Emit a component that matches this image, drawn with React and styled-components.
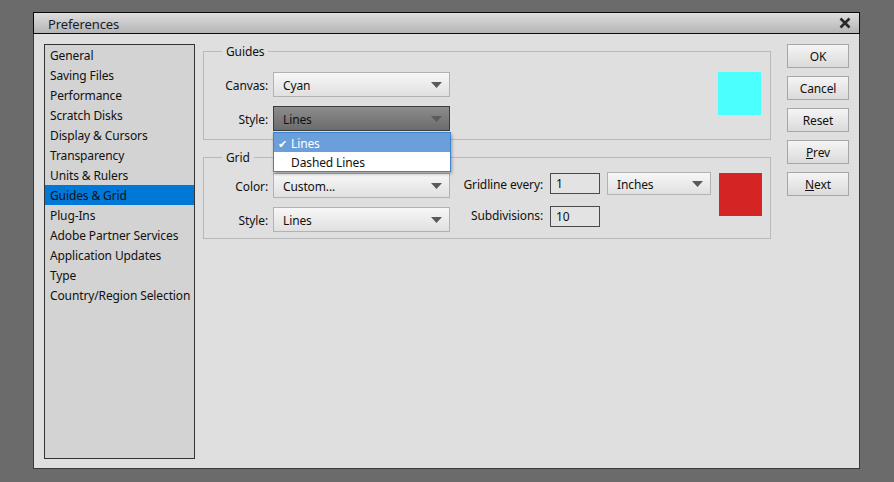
import React from "react";
import styled, { createGlobalStyle } from "styled-components";

const Global = createGlobalStyle`
  html, body { margin: 0; padding: 0; background: #6b6b6b; }
  body { font-family: "Noto Sans", "Segoe UI", sans-serif; font-size: 12px; letter-spacing: -0.12px; color: #111; }
  * { box-sizing: border-box; }
`;

const Page = styled.div`
  width: 894px;
  height: 482px;
  padding: 12px 0 0 33px;
`;

const Dialog = styled.div`
  width: 827px;
  height: 457px;
  background: #dfdfdf;
  border: 1px solid #3a3a3a;
  border-top: none;
  display: flex;
  flex-direction: column;
`;

const TitleBar = styled.div`
  height: 22px;
  margin: 0 -1px;
  border: 1px solid #0a0a0a;
  background: linear-gradient(#dedede, #b4b4b4);
  display: flex;
  align-items: center;
  justify-content: space-between;
  padding: 1px 8px 0 14px;
  font-size: 13px;
  color: #1a1a2a;
`;

const Close = styled.svg`
  width: 12px;
  height: 12px;
  margin-top: -1px;
`;

const Body = styled.div`
  flex: 1;
  display: flex;
  padding: 10px 9px 9px 10px;
`;

const List = styled.ul`
  list-style: none;
  margin: 0;
  padding: 0;
  width: 151px;
  height: 415px;
  background: #d3d3d3;
  border: 1px solid #333;
`;

const Item = styled.li`
  height: 20px;
  line-height: 20px;
  padding: 1px 0 0 5px;
  white-space: nowrap;
  background: ${(p) => (p.$active ? "#0078d7" : "transparent")};
`;

const Content = styled.div`
  width: 568px;
  margin-left: 8px;
  padding-top: 7px;
  display: flex;
  flex-direction: column;
  gap: 17px;
`;

const Group = styled.div`
  position: relative;
  border: 1px solid #b9b9b9;
  padding: ${(p) => p.$pad};
  display: flex;
`;

const GroupTitle = styled.span`
  position: absolute;
  top: -9px;
  left: 18px;
  padding: 0 4px;
  background: #dfdfdf;
  line-height: 18px;
`;

const Fields = styled.div`
  display: grid;
  grid-template-columns: 64px 177px;
  column-gap: 5px;
  row-gap: 9px;
  align-items: center;
`;

const Label = styled.span`
  text-align: right;
  white-space: nowrap;
  padding-top: 1px;
`;

const SelectBox = styled.div`
  position: relative;
  width: ${(p) => p.$w || 177}px;
  height: ${(p) => p.$h || 25}px;
  border: 1px solid ${(p) => (p.$open ? "#3c3c3c" : "#b2b2b2")};
  background: ${(p) =>
    p.$open ? "linear-gradient(#8c8c8c, #6c6c6c)" : "linear-gradient(#f7f7f7, #e0e0e0)"};
  display: flex;
  align-items: center;
  justify-content: space-between;
  padding: 1px 7px 0 9px;
  color: #111;
`;

const Arrow = styled.svg`
  width: 11px;
  height: 6px;
`;

const Menu = styled.div`
  position: absolute;
  top: 25px;
  left: -1px;
  width: 178px;
  background: #fff;
  border: 1px solid #3d82cc;
  box-shadow: 1px 2px 3px rgba(0, 0, 0, 0.3);
  z-index: 5;
`;

const MenuItem = styled.div`
  height: 19px;
  line-height: 19px;
  padding: 1px 0 0 17px;
  position: relative;
  background: ${(p) => (p.$sel ? "#6a9fdb" : "#fff")};
  color: ${(p) => (p.$sel ? "#fff" : "#111")};
`;

const Check = styled.span`
  position: absolute;
  left: 4px;
  top: 1px;
  font-size: 11px;
`;

const Swatch = styled.div`
  width: 43px;
  height: 43px;
  background: ${(p) => p.$c};
  margin-left: auto;
  align-self: flex-start;
`;

const GridFields = styled.div`
  display: grid;
  grid-template-columns: 69px 177px 93px 57px 111px;
  grid-template-rows: 25px 25px;
  row-gap: 9px;
  align-items: center;
`;

const RowLabel = styled(Label)`
  padding-right: 5px;
`;

const Label2 = styled(Label)`
  align-self: start;
  padding-top: ${(p) => p.$pt}px;
`;

const Input = styled.div`
  width: 50px;
  height: 21px;
  border: 1px solid #4a4a4a;
  background: #e3e3e3;
  padding: 1px 0 0 5px;
  line-height: 18px;
  margin-left: 7px;
  align-self: start;
  margin-top: ${(p) => p.$mt}px;
`;

const InchesCell = styled.div`
  margin-left: 7px;
  align-self: start;
  margin-top: -1px;
`;

const Buttons = styled.div`
  margin-left: 16px;
  display: flex;
  flex-direction: column;
  gap: 8px;
`;

const Button = styled.div`
  width: 62px;
  height: 24px;
  border: 1px solid #a6a6a6;
  background: linear-gradient(#f5f5f5, #dadada);
  display: flex;
  align-items: center;
  justify-content: center;
  padding-top: 1px;
  color: #111;
  u { text-decoration: underline; }
`;

const items = [
  "General",
  "Saving Files",
  "Performance",
  "Scratch Disks",
  "Display & Cursors",
  "Transparency",
  "Units & Rulers",
  "Guides & Grid",
  "Plug-Ins",
  "Adobe Partner Services",
  "Application Updates",
  "Type",
  "Country/Region Selection",
];

const Tri = () => (
  <Arrow viewBox="0 0 11 6">
    <path d="M0 0 H11 L5.5 6 Z" fill="#5a5a5a" />
  </Arrow>
);

export default function App() {
  return (
    <Page>
      <Global />
      <Dialog>
        <TitleBar>
          <span>Preferences</span>
          <Close viewBox="0 0 12 12">
            <path d="M1.5 1.5 L10.5 10.5 M10.5 1.5 L1.5 10.5" stroke="#2a2a2a" strokeWidth="2.6" />
          </Close>
        </TitleBar>
        <Body>
          <List>
            {items.map((t) => (
              <Item key={t} $active={t === "Guides & Grid"}>
                {t}
              </Item>
            ))}
          </List>
          <Content>
            <Group $pad="20px 9px 8px 0">
              <GroupTitle>Guides</GroupTitle>
              <Fields>
                <Label>Canvas:</Label>
                <SelectBox>
                  <span>Cyan</span>
                  <Tri />
                </SelectBox>
                <Label>Style:</Label>
                <SelectBox $open>
                  <span>Lines</span>
                  <Tri />
                  <Menu>
                    <MenuItem $sel>
                      <Check>✔</Check>Lines
                    </MenuItem>
                    <MenuItem>Dashed Lines</MenuItem>
                  </Menu>
                </SelectBox>
              </Fields>
              <Swatch $c="#4bffff" />
            </Group>
            <Group $pad="15px 8px 6px 0">
              <GroupTitle>Grid</GroupTitle>
              <GridFields>
                <RowLabel>Color:</RowLabel>
                <SelectBox>
                  <span>Custom...</span>
                  <Tri />
                </SelectBox>
                <Label2 $pt={3}>Gridline every:</Label2>
                <Input $mt={0}>1</Input>
                <InchesCell>
                  <SelectBox $w={104} $h={23}>
                    <span>Inches</span>
                    <Tri />
                  </SelectBox>
                </InchesCell>
                <RowLabel>Style:</RowLabel>
                <SelectBox>
                  <span>Lines</span>
                  <Tri />
                </SelectBox>
                <Label2 $pt={0}>Subdivisions:</Label2>
                <Input $mt={-1}>10</Input>
              </GridFields>
              <Swatch $c="#d52424" />
            </Group>
          </Content>
          <Buttons>
            <Button>OK</Button>
            <Button>Cancel</Button>
            <Button>Reset</Button>
            <Button>
              <span><u>P</u>rev</span>
            </Button>
            <Button>
              <span><u>N</u>ext</span>
            </Button>
          </Buttons>
        </Body>
      </Dialog>
    </Page>
  );
}
